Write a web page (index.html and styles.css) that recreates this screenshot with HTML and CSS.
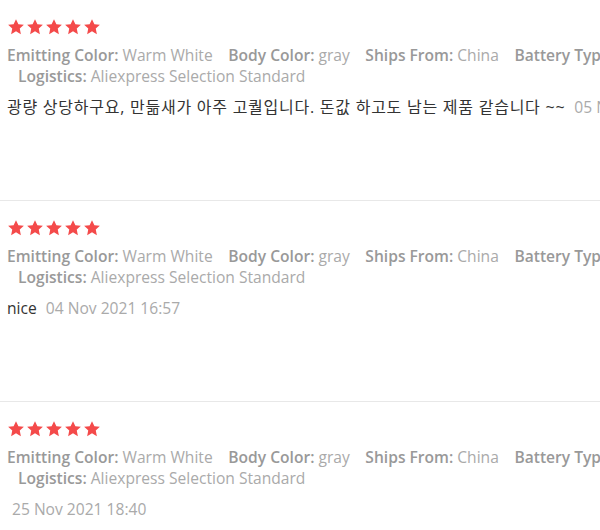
FILE: index.html
```html
<!DOCTYPE html>
<html lang="ko">
<head>
  <meta charset="UTF-8" />
  <title>Feedback</title>
  <link rel="stylesheet" href="styles.css">
</head>
<body>
  <div class="feedback-list">

    <!-- review 1 -->
    <div class="review">
      <div class="stars">
        <svg viewBox="0 0 24 24"><polygon points="12,1.5 15.2,8.3 22.5,9.1 17,14.1 18.5,21.5 12,17.8 5.5,21.5 7,14.1 1.5,9.1 8.8,8.3"/></svg>
        <svg viewBox="0 0 24 24"><polygon points="12,1.5 15.2,8.3 22.5,9.1 17,14.1 18.5,21.5 12,17.8 5.5,21.5 7,14.1 1.5,9.1 8.8,8.3"/></svg>
        <svg viewBox="0 0 24 24"><polygon points="12,1.5 15.2,8.3 22.5,9.1 17,14.1 18.5,21.5 12,17.8 5.5,21.5 7,14.1 1.5,9.1 8.8,8.3"/></svg>
        <svg viewBox="0 0 24 24"><polygon points="12,1.5 15.2,8.3 22.5,9.1 17,14.1 18.5,21.5 12,17.8 5.5,21.5 7,14.1 1.5,9.1 8.8,8.3"/></svg>
        <svg viewBox="0 0 24 24"><polygon points="12,1.5 15.2,8.3 22.5,9.1 17,14.1 18.5,21.5 12,17.8 5.5,21.5 7,14.1 1.5,9.1 8.8,8.3"/></svg>
      </div>
      <div class="attrs">
        <span class="attr"><b>Emitting Color:</b> Warm White</span>
        <span class="attr"><b>Body Color:</b> gray</span>
        <span class="attr"><b>Ships From:</b> China</span>
        <span class="attr"><b>Battery Type:</b> Not Include</span>
        <span class="attr"><b>Logistics:</b> Aliexpress Selection Standard</span>
      </div>
      <div class="content">
        <span class="text">광량 상당하구요, 만듦새가 아주 고퀄입니다. 돈값 하고도 남는 제품 같습니다 ~~</span>
        <span class="date">05 Nov 2021 10:12</span>
      </div>
    </div>

    <!-- review 2 -->
    <div class="review">
      <div class="stars">
        <svg viewBox="0 0 24 24"><polygon points="12,1.5 15.2,8.3 22.5,9.1 17,14.1 18.5,21.5 12,17.8 5.5,21.5 7,14.1 1.5,9.1 8.8,8.3"/></svg>
        <svg viewBox="0 0 24 24"><polygon points="12,1.5 15.2,8.3 22.5,9.1 17,14.1 18.5,21.5 12,17.8 5.5,21.5 7,14.1 1.5,9.1 8.8,8.3"/></svg>
        <svg viewBox="0 0 24 24"><polygon points="12,1.5 15.2,8.3 22.5,9.1 17,14.1 18.5,21.5 12,17.8 5.5,21.5 7,14.1 1.5,9.1 8.8,8.3"/></svg>
        <svg viewBox="0 0 24 24"><polygon points="12,1.5 15.2,8.3 22.5,9.1 17,14.1 18.5,21.5 12,17.8 5.5,21.5 7,14.1 1.5,9.1 8.8,8.3"/></svg>
        <svg viewBox="0 0 24 24"><polygon points="12,1.5 15.2,8.3 22.5,9.1 17,14.1 18.5,21.5 12,17.8 5.5,21.5 7,14.1 1.5,9.1 8.8,8.3"/></svg>
      </div>
      <div class="attrs">
        <span class="attr"><b>Emitting Color:</b> Warm White</span>
        <span class="attr"><b>Body Color:</b> gray</span>
        <span class="attr"><b>Ships From:</b> China</span>
        <span class="attr"><b>Battery Type:</b> Not Include</span>
        <span class="attr"><b>Logistics:</b> Aliexpress Selection Standard</span>
      </div>
      <div class="content">
        <span class="text">nice</span>
        <span class="date">04 Nov 2021 16:57</span>
      </div>
    </div>

    <!-- review 3 -->
    <div class="review">
      <div class="stars">
        <svg viewBox="0 0 24 24"><polygon points="12,1.5 15.2,8.3 22.5,9.1 17,14.1 18.5,21.5 12,17.8 5.5,21.5 7,14.1 1.5,9.1 8.8,8.3"/></svg>
        <svg viewBox="0 0 24 24"><polygon points="12,1.5 15.2,8.3 22.5,9.1 17,14.1 18.5,21.5 12,17.8 5.5,21.5 7,14.1 1.5,9.1 8.8,8.3"/></svg>
        <svg viewBox="0 0 24 24"><polygon points="12,1.5 15.2,8.3 22.5,9.1 17,14.1 18.5,21.5 12,17.8 5.5,21.5 7,14.1 1.5,9.1 8.8,8.3"/></svg>
        <svg viewBox="0 0 24 24"><polygon points="12,1.5 15.2,8.3 22.5,9.1 17,14.1 18.5,21.5 12,17.8 5.5,21.5 7,14.1 1.5,9.1 8.8,8.3"/></svg>
        <svg viewBox="0 0 24 24"><polygon points="12,1.5 15.2,8.3 22.5,9.1 17,14.1 18.5,21.5 12,17.8 5.5,21.5 7,14.1 1.5,9.1 8.8,8.3"/></svg>
      </div>
      <div class="attrs">
        <span class="attr"><b>Emitting Color:</b> Warm White</span>
        <span class="attr"><b>Body Color:</b> gray</span>
        <span class="attr"><b>Ships From:</b> China</span>
        <span class="attr"><b>Battery Type:</b> Not Include</span>
        <span class="attr"><b>Logistics:</b> Aliexpress Selection Standard</span>
      </div>
      <div class="content">
        <span class="text"></span>
        <span class="date">25 Nov 2021 18:40</span>
      </div>
    </div>

  </div>
</body>
</html>
```

FILE: styles.css
```css
body {
  margin: 0;
  background: #fff;
  font-family: "Open Sans", "Noto Sans CJK KR", sans-serif;
  font-size: 15.6px;
  color: #333;
  overflow: hidden;
}
.feedback-list {
  width: 760px;
}
.review {
  box-sizing: border-box;
  height: 201px;
  padding: 18px 0 0 7px;
  border-bottom: 1px solid #e8e8e8;
}
.stars {
  display: flex;
  gap: 1px;
  height: 18px;
}
.stars svg {
  width: 18px;
  height: 18px;
  fill: #f44a4a;
}
.attrs {
  margin-top: 9px;
  line-height: 21px;
  padding-left: 11px;
  text-indent: -11px;
  width: 720px;
}
.attr {
  display: inline-block;
  white-space: nowrap;
  text-indent: 0;
  margin-right: 11.5px;
  color: #aaa;
}
.attr b {
  font-weight: 600;
  color: #999;
}
.content {
  margin-top: 10px;
  line-height: 21px;
  white-space: nowrap;
}
.text {
  color: #333;
}
.review:first-child .text {
  font-size: 16px;
  letter-spacing: 0.75px;
}
.date {
  color: #aaa;
  margin-left: 5px;
}
```
